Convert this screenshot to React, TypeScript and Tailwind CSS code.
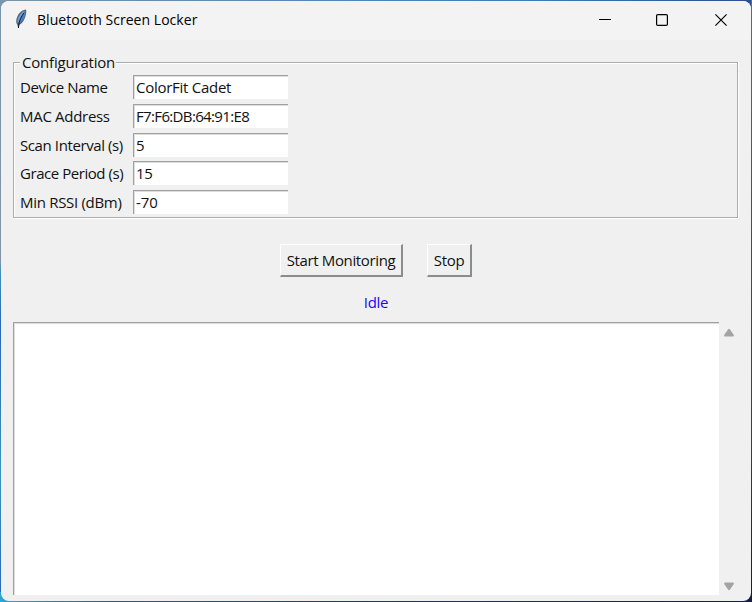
import React from "react";

const fields = [
  { label: "Device Name", value: "ColorFit Cadet", labelTracking: "tracking-[-0.4px]", valueTracking: "tracking-[-0.27px]" },
  { label: "MAC Address", value: "F7:F6:DB:64:91:E8", labelTracking: "tracking-[-0.3px]", valueTracking: "tracking-[-0.65px]" },
  { label: "Scan Interval (s)", value: "5", labelTracking: "tracking-[-0.4px]", valueTracking: "tracking-[-0.4px]" },
  { label: "Grace Period (s)", value: "15", labelTracking: "tracking-[-0.45px]", valueTracking: "tracking-[-0.4px]" },
  { label: "Min RSSI (dBm)", value: "-70", labelTracking: "tracking-[-0.3px]", valueTracking: "tracking-[-0.1px]" },
];

function Feather() {
  return (
    <svg className="mb-[3px] ml-[12px] h-5 w-4" viewBox="0 0 16 20">
      <path d="M13 .5C9.5 .8 6 3.6 4.4 7.5C2.9 10.5 2.7 14 4.2 15.5L5.4 19.5L6.6 15.7C9 14.6 11.3 11.5 12.4 7.5C13.2 5 13.6 2 13 .5Z" fill="#59616b" />
      <path d="M12.2 1.5C9.2 2.8 6.2 5.8 5 9.5C4.2 11.5 4.1 13.6 4.9 14.6C7.3 10 10 6 12.2 1.5Z" fill="#69a3e5" />
      <path d="M12.5 2C12.9 6.5 9.8 12.4 6 14.7C7.8 10.5 10.4 6.5 12.5 2Z" fill="#4286d8" />
      <path d="M10.8 4C8.5 7.2 5.8 11.5 5.4 19" fill="none" stroke="#171d27" strokeWidth="1" />
    </svg>
  );
}

function TitleBar() {
  return (
    <header className="flex h-[39px] shrink-0 items-center bg-[#f3f3f3]">
      <Feather />
      <h1 className="mb-[2px] ml-[8px] text-[14px] leading-5 tracking-[0.04px] whitespace-nowrap text-black">Bluetooth Screen Locker</h1>
      <div className="ml-auto flex h-full items-center gap-[46px] pr-[24px] pb-[2px]">
        <svg className="-mr-px size-3" viewBox="0 0 12 12" stroke="#000"><path d="M0 5.5H12" /></svg>
        <svg className="mr-px size-3" viewBox="0 0 12 12" fill="none" stroke="#000" strokeWidth="1.2"><rect x=".6" y=".6" width="10.8" height="10.8" rx="1.2" /></svg>
        <svg className="size-3" viewBox="0 0 12 12" stroke="#000" strokeWidth="1.15"><path d="M.4 .4L11.6 11.6M11.6 .4L.4 11.6" /></svg>
      </div>
    </header>
  );
}

export default function App() {
  return (
    <div className="flex h-[602px] w-[752px] flex-col overflow-hidden bg-[linear-gradient(90deg,#7895ab,#3f7cbb_70%,#294f91)] font-['Open_Sans','Noto_Sans',sans-serif] text-[15px] text-[#111]">
      <div className="h-[602px] bg-[linear-gradient(90deg,#2ea5d0,#235f98_15%,#203768_50%,#151d43)] bg-[length:100%_12px] bg-bottom bg-no-repeat">
        <div className="flex h-[592px] justify-between">
          <div className="h-full w-px bg-[linear-gradient(180deg,#7895ab,#8294a5_44%,#3f91bd_46%,#2868b3_55%,#3c93bd_80%,#286ab8)]" />
          <main className="flex h-[600px] w-[750px] shrink-0 translate-y-px flex-col overflow-hidden rounded-[8px] bg-[#f0f0f0]">
            <TitleBar />
            <fieldset className="mt-[13px] ml-[12px] h-[165px] w-[725px] shrink-0">
              <div className="flex h-[18px] items-end">
                <div className="h-[9px] w-[7px] border-t border-l border-[#acacac] shadow-[inset_1px_1px_0_#fff]" />
                <legend className="h-[18px] pr-px pl-[2px] leading-[19px] tracking-[-0.2px] whitespace-nowrap">Configuration</legend>
                <div className="h-[9px] flex-1 border-t border-r border-[#acacac] shadow-[inset_0_1px_0_#fff,1px_0_0_#fff]" />
              </div>
              <div className="h-[147px] border-x border-b border-[#acacac] pt-[4px] shadow-[inset_1px_0_0_#fff,1px_1px_0_#fff]">
                {fields.map((field) => (
                  <div key={field.label} className="flex h-[28.75px] items-start">
                    <label className={`w-[119px] shrink-0 pl-[6px] leading-[24px] whitespace-nowrap ${field.labelTracking}`}>{field.label}</label>
                    <div className={`h-6 w-[155px] border-t border-l border-t-[#a0a0a0] border-l-[#a0a0a0] bg-white pl-[2px] leading-[22px] whitespace-nowrap shadow-[inset_1px_1px_0_#dedede] ${field.valueTracking}`}>{field.value}</div>
                  </div>
                ))}
              </div>
            </fieldset>
            <div className="mt-[26px] ml-[279px] flex h-[33px] shrink-0 gap-[24px]">
              <button className="flex h-[33px] w-[123px] items-center justify-center border-t border-r-2 border-b-2 border-l border-t-white border-r-[#8c8c8c] border-b-[#8c8c8c] border-l-white pb-px leading-5 tracking-[-0.37px] whitespace-nowrap">Start Monitoring</button>
              <button className="flex h-[33px] w-[45px] items-center justify-center border-t border-r-2 border-b-2 border-l border-t-white border-r-[#8c8c8c] border-b-[#8c8c8c] border-l-white pb-px leading-5 tracking-[-0.3px]">Stop</button>
            </div>
            <p className="mt-[15px] h-5 shrink-0 text-center leading-5 tracking-[-0.3px] text-[#2100ff]">Idle</p>
            <div className="mt-[10px] ml-[12px] flex h-[273px] shrink-0">
              <div className="w-[706px] border-t border-l border-t-[#a0a0a0] border-l-[#a0a0a0] bg-white shadow-[inset_1px_1px_0_#dedede]" />
              <div className="flex w-[20px] flex-col items-center justify-between pt-[6px] pb-[4px]">
                <svg className="h-[9px] w-[12px]" viewBox="0 0 12 9"><path d="M5 1.5Q6 0 7 1.5L10.8 7Q11.3 8.5 10 8.5H2Q.7 8.5 1.2 7Z" fill="#a3a3a3" /></svg>
                <svg className="h-[9px] w-[12px]" viewBox="0 0 12 9"><path d="M5 7.5Q6 9 7 7.5L10.8 2Q11.3 .5 10 .5H2Q.7 .5 1.2 2Z" fill="#a3a3a3" /></svg>
              </div>
            </div>
          </main>
          <div className="h-full w-px bg-[linear-gradient(180deg,#4070b8,#294f91_40%,#263b83_75%,#151d43)]" />
        </div>
      </div>
    </div>
  );
}
